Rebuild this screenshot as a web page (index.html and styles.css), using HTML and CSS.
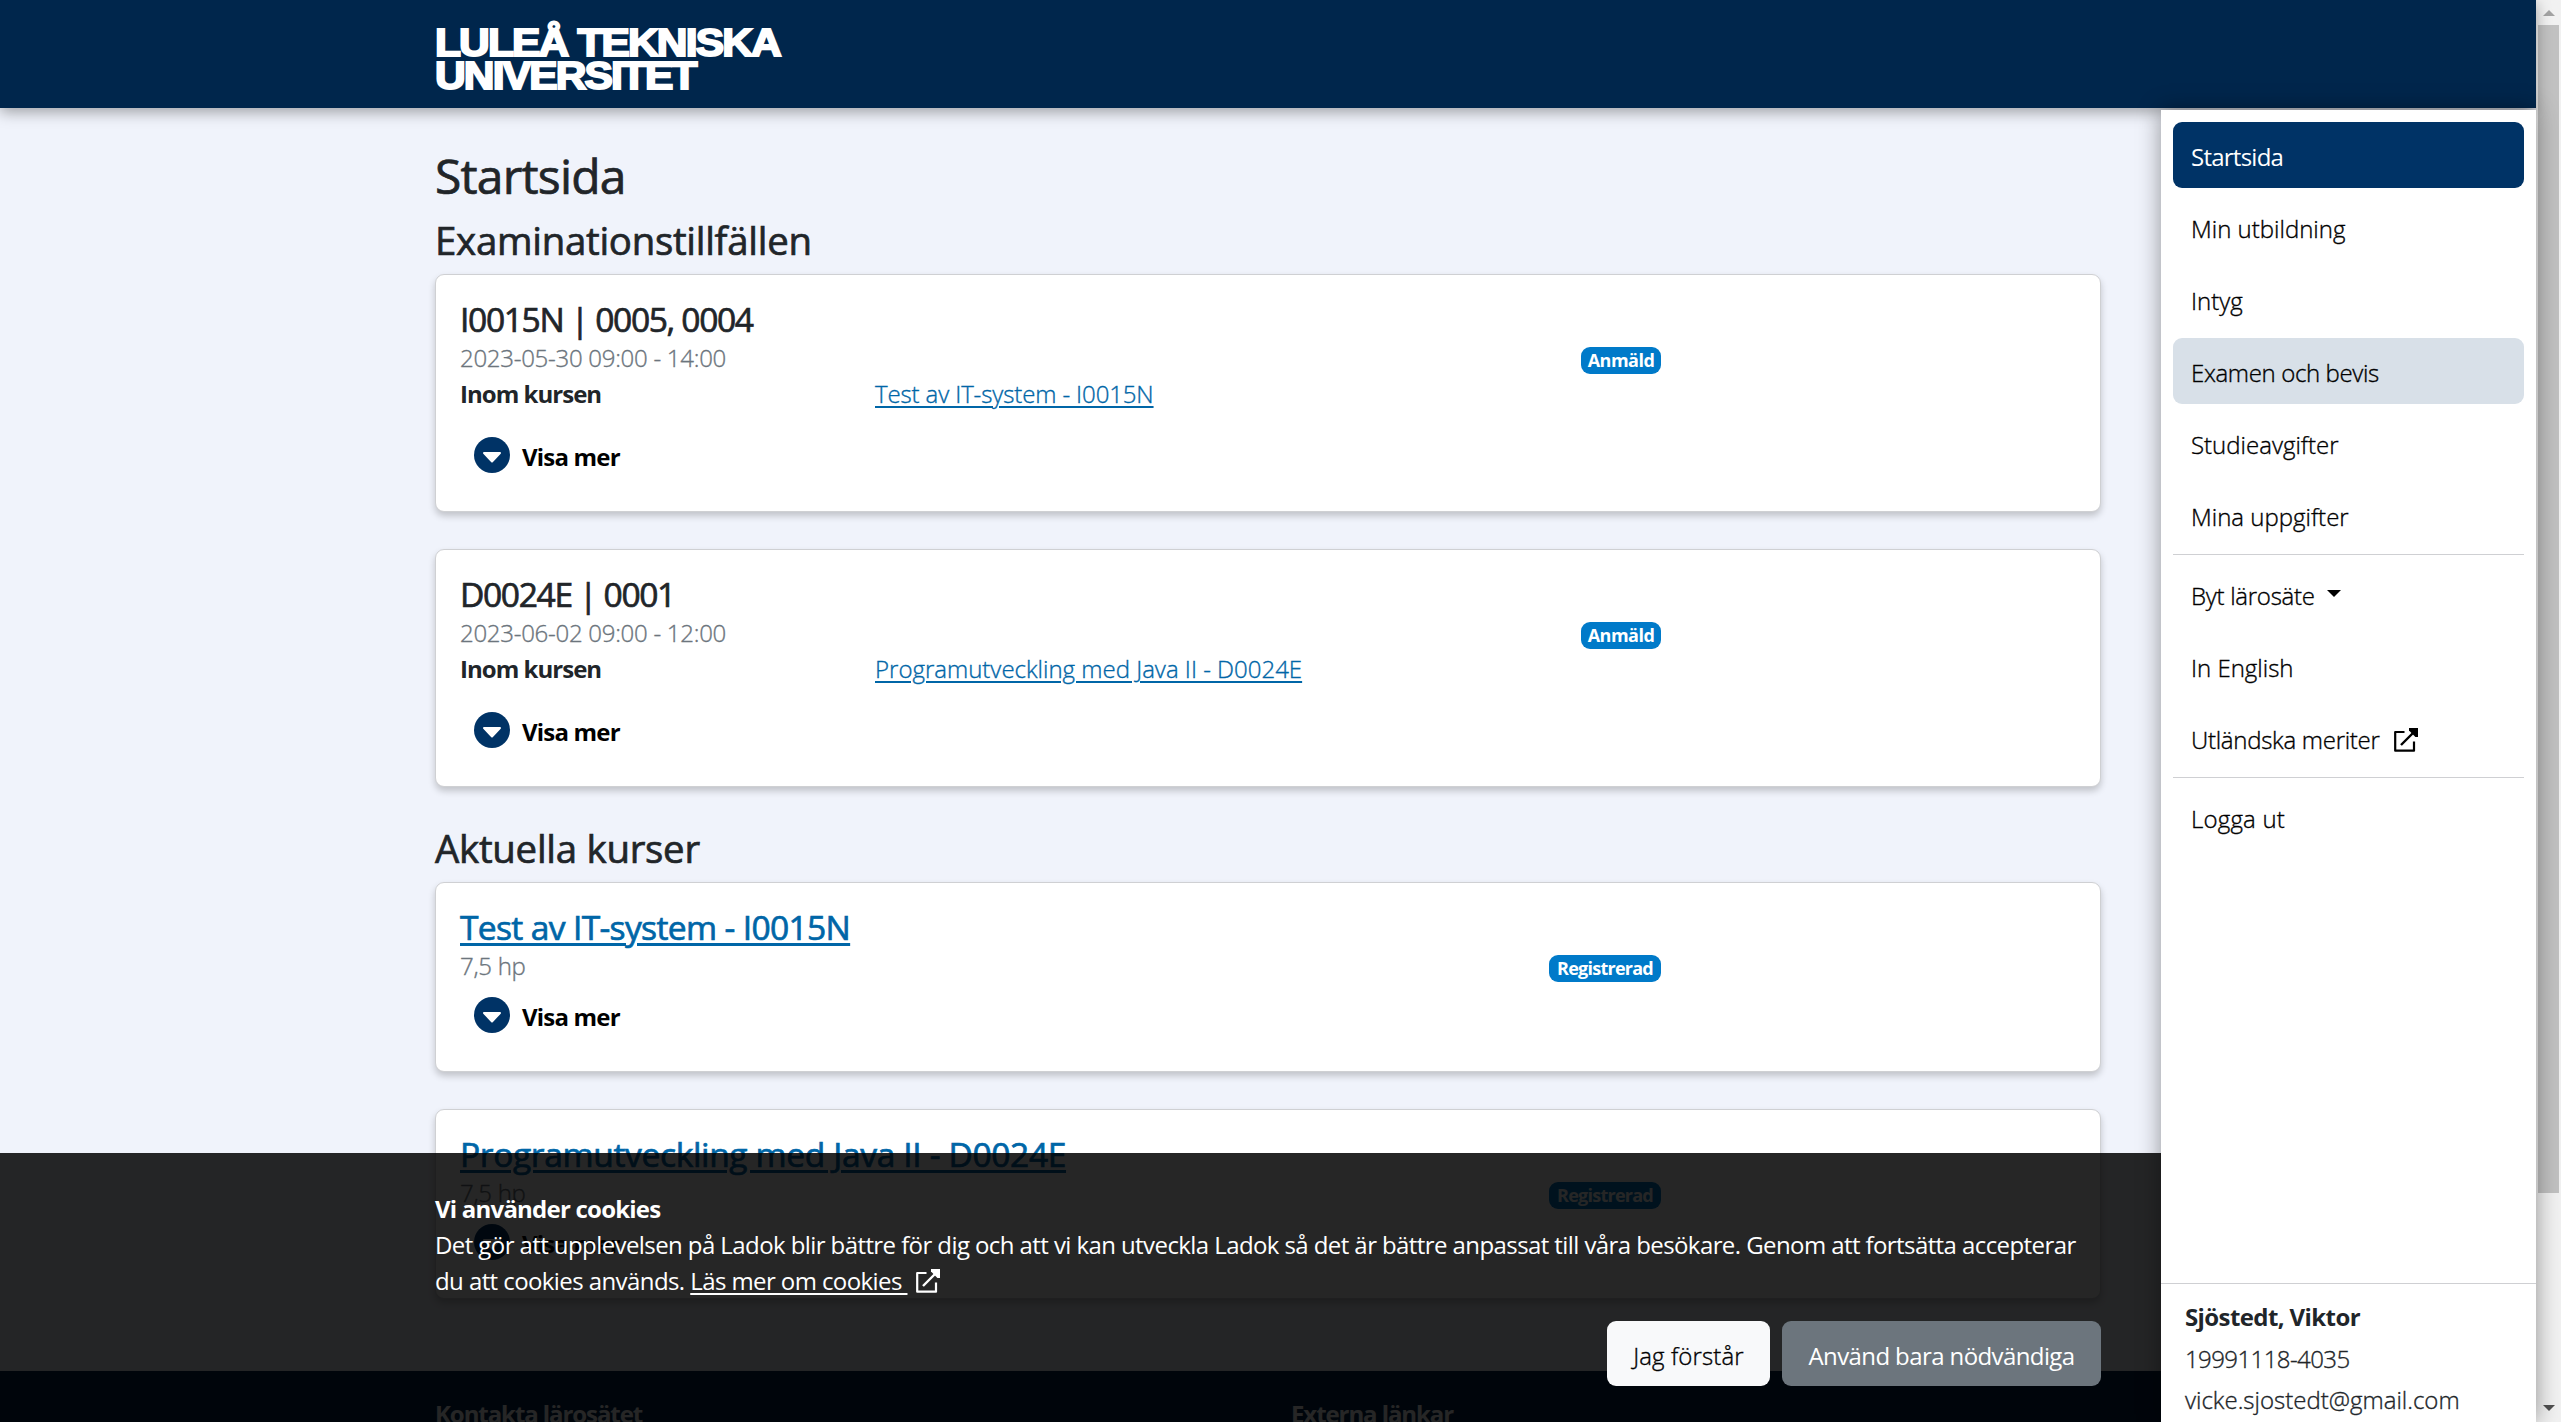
FILE: index.html
```html
<!DOCTYPE html>
<html lang="sv">
<head>
<meta charset="utf-8">
<title>Startsida - Ladok</title>
<link rel="stylesheet" href="styles.css">
</head>
<body>
<svg class="defs" aria-hidden="true">
  <symbol id="chevron" viewBox="0 0 36 36"><circle cx="18" cy="18" r="18" fill="#003366"/><path d="M10 16h16L18 24.500z" fill="#fff" stroke="#fff" stroke-width="2" stroke-linejoin="round"/></symbol>
  <symbol id="external" viewBox="0 0 24 24"><path d="M10.500 4H1.200V22.700H20V13.500" fill="none" stroke="currentColor" stroke-width="2.200" stroke-linejoin="round"/><path d="M7 17L20.500 3.500" fill="none" stroke="currentColor" stroke-width="2.400"/><path d="M15 0h9v9h-2.600L15 2.600z" fill="currentColor"/></symbol>
</svg>
<header class="topbar"><div class="logo"><span>LULEÅ TEKNISKA</span><span>UNIVERSITET</span></div></header>
<div class="layout">
  <div class="page">
    <main class="content">
      <h1>Startsida</h1>
      <h2>Examinationstillfällen</h2>
      <article class="card">
        <h3 class="exam">I0015N | 0005, 0004</h3>
        <div class="meta"><span class="date">2023-05-30 09:00 - 14:00</span><span class="badge">Anmäld</span></div>
        <div class="row"><b>Inom kursen</b><a class="short">Test av IT-system - I0015N</a></div>
        <div class="more"><svg><use href="#chevron"/></svg><span>Visa mer</span></div>
      </article>
      <article class="card">
        <h3 class="exam">D0024E | 0001</h3>
        <div class="meta"><span class="date">2023-06-02 09:00 - 12:00</span><span class="badge">Anmäld</span></div>
        <div class="row"><b>Inom kursen</b><a>Programutveckling med Java II - D0024E</a></div>
        <div class="more"><svg><use href="#chevron"/></svg><span>Visa mer</span></div>
      </article>
      <h2 class="second">Aktuella kurser</h2>
      <article class="card course">
        <h3><a class="short">Test av IT-system - I0015N</a></h3>
        <div class="meta"><span class="date">7,5 hp</span><span class="badge reg">Registrerad</span></div>
        <div class="more"><svg><use href="#chevron"/></svg><span>Visa mer</span></div>
      </article>
      <article class="card course">
        <h3><a>Programutveckling med Java II - D0024E</a></h3>
        <div class="meta"><span class="date">7,5 hp</span><span class="badge reg">Registrerad</span></div>
        <div class="more"><svg><use href="#chevron"/></svg><span>Visa mer</span></div>
      </article>
    </main>
    <footer class="footer"><b>Kontakta lärosätet</b><b>Externa länkar</b></footer>
    <section class="cookies">
      <b>Vi använder cookies</b>
      <p>Det gör att upplevelsen på Ladok blir bättre för dig och att vi kan utveckla Ladok så det är bättre anpassat till våra besökare. Genom att fortsätta accepterar<br>du att cookies används. <a>Läs mer om cookies&nbsp;</a><svg class="ext"><use href="#external"/></svg></p>
      <div class="buttons"><button class="light">Jag förstår</button><button class="grey">Använd bara nödvändiga</button></div>
    </section>
  </div>
  <aside class="sidebar">
    <nav>
      <a class="item active">Startsida</a>
      <a class="item">Min utbildning</a>
      <a class="item">Intyg</a>
      <a class="item hover">Examen och bevis</a>
      <a class="item">Studieavgifter</a>
      <a class="item">Mina uppgifter</a>
      <hr>
      <a class="item tight">Byt lärosäte<i class="caret"></i></a>
      <a class="item">In English</a>
      <a class="item tight">Utländska meriter<svg class="ext"><use href="#external"/></svg></a>
      <hr>
      <a class="item loose">Logga ut</a>
    </nav>
    <div class="profile"><b>Sjöstedt, Viktor</b><span class="pnr">19991118-4035</span><span>vicke.sjostedt@gmail.com</span></div>
  </aside>
</div>
<div class="scrollbar"><i class="up"></i><i class="thumb"></i><i class="down"></i></div>
</body>
</html>
```
FILE: styles.css
```css
* { box-sizing: border-box; }
html, body { margin: 0; height: 1422px; overflow: hidden; }
body {
  display: grid;
  grid-template: 108px 1314px / 2536px 25px;
  background: #f0f3fb;
  color: #212529;
  font: 300 24px/36px "Open Sans", "Noto Sans", sans-serif;
  -webkit-text-stroke: .35px;
  white-space: nowrap;
}
.defs { position: absolute; width: 0; height: 0; }
h1, h2, h3, p { margin: 0; font-weight: 500; }
h1, h2, h3 { -webkit-text-stroke: .7px; }
b { font-weight: 700; letter-spacing: -.97px; -webkit-text-stroke: 0; }
a { color: #0066a7; text-decoration: underline; text-decoration-thickness: 2px; text-underline-offset: 3px; }

.topbar { background: #00264c; box-shadow: 0 4px 14px rgba(0,0,0,.35); padding: 26px 0 0 435px; z-index: 3; }
.logo { display: flex; flex-direction: column; align-items: flex-start; width: fit-content; color: #fff; font: 700 39px/33px "Liberation Sans", Arial, sans-serif; letter-spacing: -1.7px; -webkit-text-stroke: 2px #fff; transform: scaleX(1.09); transform-origin: 0 0; }

.layout { display: grid; grid-template-columns: 2161px 375px; height: 1314px; min-height: 0; }
.page { position: relative; height: 1314px; overflow: hidden; display: flex; flex-direction: column; }
.content { padding: 36px 60px 0 435px; height: 1263px; flex: none; }
h1 { font-size: 48px; line-height: 64px; letter-spacing: -.8px; }
h2 { font-size: 38.400px; line-height: 48px; margin: 8px 0 10px; letter-spacing: -.27px; }
h2.second { margin-top: 0; }
.card {
  height: 238px;
  margin-bottom: 37px;
  padding: 24px;
  background: #fff;
  border: 1px solid #cfd0d3;
  border-radius: 9px;
  box-shadow: 0 4px 7px rgba(0,0,0,.2);
}
.card.course { height: 190px; }
h3 { font-size: 33.600px; line-height: 41px; letter-spacing: -.37px; }
h3 .short { letter-spacing: -.66px; }
h3.exam { letter-spacing: -1.35px; }
h3 a { text-decoration-thickness: 3px; }
.meta { display: flex; justify-content: space-between; width: 1201px; color: #6c757d; }
.date { letter-spacing: -.27px; }
.badge { align-self: center; height: 27px; margin-top: 4px; width: 80px; border-radius: 9px; background: #007ac9; color: #fff; font-weight: 700; font-size: 18px; line-height: 27px; letter-spacing: -.5px; text-align: center; -webkit-text-stroke: 0; }
.badge.reg { width: 112px; letter-spacing: -.75px; }
.row { display: grid; grid-template-columns: 415px auto; justify-content: start; }
.row .short { letter-spacing: -.12px; }
.more { display: flex; align-items: center; gap: 12px; margin: 25px 0 0 14px; height: 36px; color: #000; font-weight: 700; letter-spacing: -.8px; -webkit-text-stroke: 0; }
.more span { padding-top: 3px; }
.course .more { margin-top: 13px; }
.more svg { width: 36px; height: 36px; }

.footer { flex: none; height: 200px; background: #00264c; color: #fff; padding: 25px 0 0 435px; display: grid; grid-template-columns: 856px auto; }
.footer b { letter-spacing: -1.08px; }

.cookies { position: absolute; left: 0; right: 0; top: 1045px; height: 269px; padding: 38px 60px 0 435px; background: rgba(0,0,0,.85); color: #fff; -webkit-text-stroke: 0; }
.cookies b { display: block; letter-spacing: -.78px; }
.cookies p { font-weight: 400; letter-spacing: -.585px; }
.cookies a { color: #fff; }
.ext { width: 24px; height: 24px; }
.cookies .ext { margin-left: 9px; vertical-align: -3px; }
.buttons { display: flex; justify-content: flex-end; gap: 12px; margin-top: 22px; }
button { height: 65px; border: 0; border-radius: 9px; font: 300 24px/62px "Open Sans", sans-serif; padding: 4px 0 0; white-space: nowrap; }
.light { width: 163px; background: #f8f9fa; color: #000; letter-spacing: .12px; -webkit-text-stroke: .35px; }
.grey { width: 319px; background: #6c757d; color: #fff; font-weight: 400; letter-spacing: -.6px; }

.sidebar { display: flex; flex-direction: column; justify-content: space-between; margin-top: 2px; height: 1312px; background: #fff; box-shadow: 0 0 22px rgba(0,0,0,.4); z-index: 4; }
nav { padding: 12px 12px 0; }
.item { display: flex; align-items: center; height: 66px; margin-bottom: 6px; padding: 3px 18px 0; border-radius: 9px; color: #000; text-decoration: none; }
.item.active { background: #003366; color: #fff; font-weight: 400; letter-spacing: -.75px; -webkit-text-stroke: 0; }
.item.hover { background: #d8e0e8; letter-spacing: -.36px; }
.item.tight { letter-spacing: -.28px; }
.item.loose { letter-spacing: .2px; }
.item .ext { margin-left: 14px; }
hr { width: 100%; height: 1px; border: 0; background: #cfd0d3; margin: 0 0 6px; }
.caret { margin: -4px 0 0 12px; border: 7px solid transparent; border-top-color: #000; border-bottom: 0; }
.profile { height: 139px; border-top: 1px solid #cfd0d3; padding: 12px 24px 0; display: flex; flex-direction: column; align-items: flex-start; line-height: 41.600px; }
.profile b { letter-spacing: -.6px; }
.pnr { letter-spacing: -.58px; }

.scrollbar { grid-column: 2; grid-row: 1 / 3; background: #f1f1f1; display: flex; flex-direction: column; align-items: center; }
.thumb { width: 21px; height: 1168px; background: #c1c1c1; }
.up { margin: 10px 0 9px; border: 6px solid transparent; border-bottom-color: #a3a3a3; border-top: 0; }
.down { margin: auto 0 11px; border: 6px solid transparent; border-top-color: #505050; border-bottom: 0; }
```
